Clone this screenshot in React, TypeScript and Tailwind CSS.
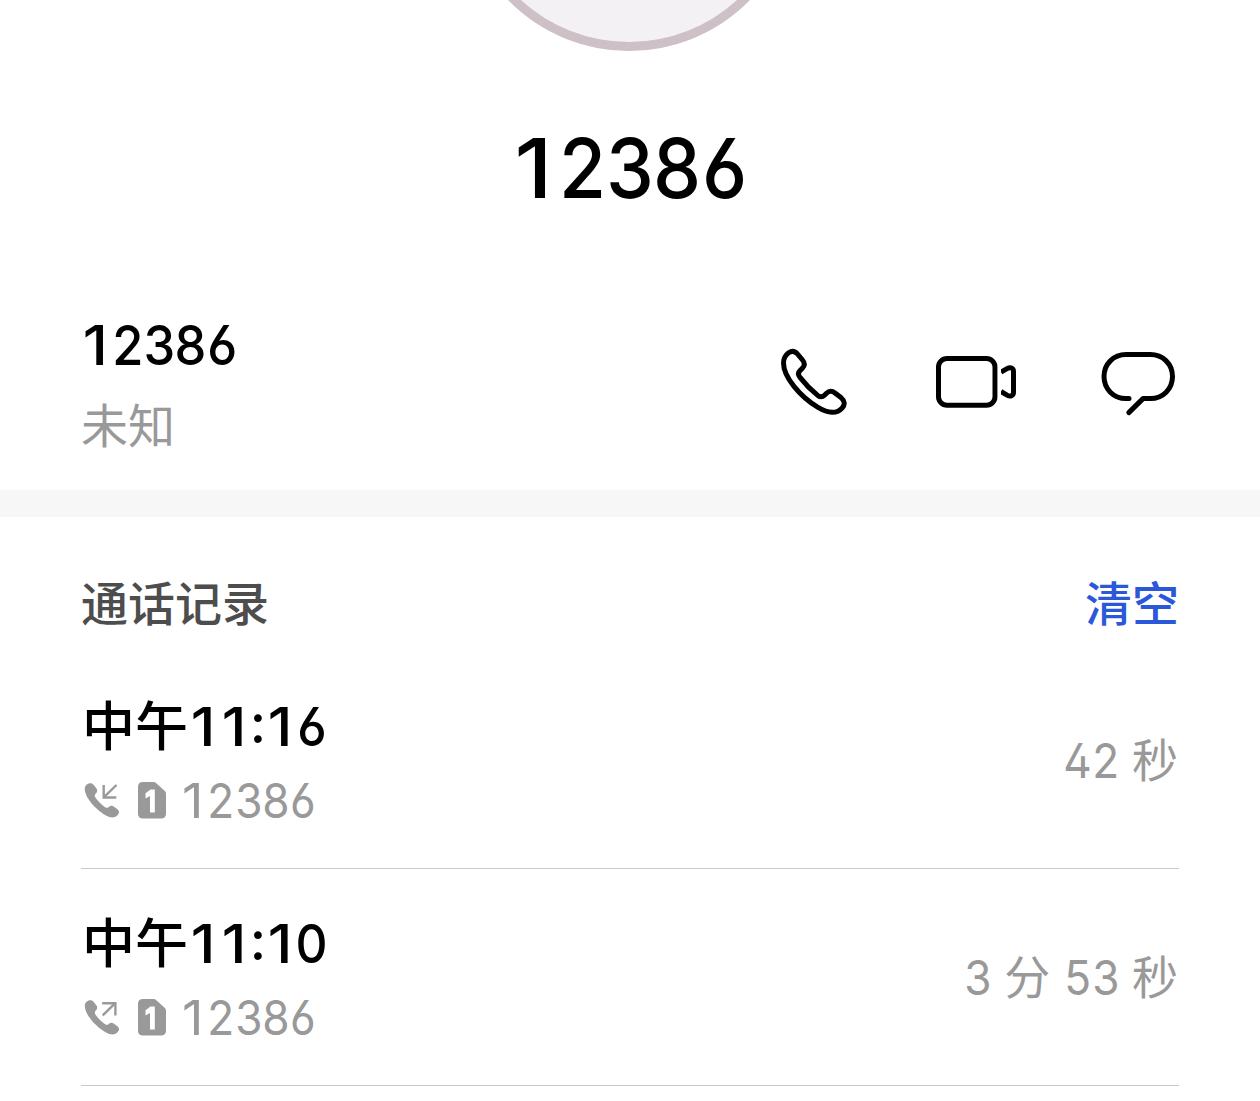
import type { ReactNode } from 'react';

const cjk = "font-['Noto_Sans_CJK_SC',sans-serif]";

function glyphClass(char: string) {
  if (char === '1') return '-translate-x-[0.02em] scale-x-[1.1]';
  if (char === ':') return '-translate-y-[0.06em]';
  return 'scale-x-[0.92]';
}

function Digits({ className, children }: { className: string; children: string }) {
  return (
    <span className={`inline-flex font-['Inter',sans-serif] [font-feature-settings:'cv02','cv03'] ${className}`}>
      {children.split('').map((char, i) => (
        <span key={i} className={`inline-flex shrink-0 justify-center ${char === ':' ? 'w-[0.278em]' : 'w-[0.57em]'}`}>
          <span className={glyphClass(char)}>{char}</span>
        </span>
      ))}
    </span>
  );
}

function PhoneIcon() {
  return (
    <svg width="70" height="70" viewBox="0 0 70 70" fill="none" stroke="black" strokeWidth="5" strokeLinejoin="round">
      <path d="M3.5 16C3.5 11 5.8 7.8 8.6 5.7C11.7 3.6 15 4 17.5 7L22.5 13C25 16 24.7 19 22.2 21.4L20.2 23.4C18 25.5 18 28 20 30.4C25.5 37.5 31.5 43.5 37.7 48.4C40.3 50.3 42.5 50.2 44.5 48.2L46.5 46.2C49 43.8 52 43.6 55 46L61 50.6C64.8 53.8 65.2 57.6 62.3 60.8C57 67 48 66.4 38 60.4C20 49.5 3.5 30 3.5 16Z" />
    </svg>
  );
}

function VideoIcon() {
  return (
    <svg width="82" height="54" viewBox="0 0 82 54" fill="none" stroke="black" strokeWidth="5">
      <rect x="3.5" y="3.5" width="56.5" height="46.7" rx="8.5" />
      <path d="M66 17.2L72 13.6C75.5 11.7 78.5 13 78.5 16.5V37.2C78.5 40.7 75.5 42 72 40.1L66 36.5" />
      <path d="M62.8 10H66V44H62.8Z" fill="white" stroke="none" />
    </svg>
  );
}

function MessageIcon() {
  return (
    <svg width="76" height="66" viewBox="0 0 76 66" fill="none" stroke="black" strokeWidth="5" strokeLinecap="round" strokeLinejoin="round">
      <path d="M29 47.6H26C13.5 47.6 4 38 4 25.6C4 13 13.5 3.6 26 3.6H50.3C63 3.6 72.5 13 72.5 25.6C72.5 38 63 47.6 50.3 47.6H43L28.8 61.6" />
    </svg>
  );
}

function CallIcon({ outgoing }: { outgoing: boolean }) {
  return (
    <svg width="36" height="37" viewBox="0 0 36 37" fill="none">
      <path fill="#999999" d="M.8 7C.8 2 6.5-.4 9.5 2.7L12.3 6.3C13.8 8.2 13.4 10 11.8 11.6C10.4 13 10.5 14.4 11.7 16C14.3 19.6 17.2 22.4 20.8 25C22.5 26.3 23.5 26 24.8 24.9C26.2 23.6 27.8 23.3 29.7 24.5L33.4 27.2C35.8 29.1 35.5 31.5 33 33.8C30 36.4 26.2 35.9 21.6 33.3C11.7 27.5.8 15.5.8 7Z" />
      {outgoing ? (
        <g stroke="#999999" strokeWidth="2.4">
          <path d="M18.2 4.3H31.4V16.5" />
          <path d="M18.7 16.3L31 4.4" />
        </g>
      ) : (
        <g stroke="#999999" strokeWidth="2.4">
          <path d="M19.7 3V15.5H32.3" />
          <path d="M20 15.2L32.5 3" />
        </g>
      )}
    </svg>
  );
}

function SimIcon() {
  return (
    <svg width="28" height="37" viewBox="0 0 28 37">
      <path fill="#999999" d="M5 0H15.2C16.4 0 17.2.3 18 1L26.6 8.8C27.6 9.7 28 10.5 28 11.8V31.5C28 34.8 26.3 36.5 23 36.5H5C1.7 36.5 0 34.8 0 31.5V5C0 1.7 1.7 0 5 0Z" />
      <path fill="white" d="M12.5 7.5H16.8V30.5H12V14L7.5 16.5V11.3Z" />
    </svg>
  );
}

function CallRow({ minute, outgoing, duration }: { minute: string; outgoing: boolean; duration: ReactNode }) {
  return (
    <div className="flex h-[217px] shrink-0 items-start justify-between border-b border-[#c9c9c9]">
      <div>
        <div className="flex h-[124px] items-start pt-[44px] pl-px text-[54px] leading-[60px] font-medium text-black">
          <span className={`${cjk} -mt-[3px] w-[107px] whitespace-nowrap text-[53px]`}>中午</span>
          <Digits className="mt-px">{minute}</Digits>
        </div>
        <div className="flex h-[48px] items-center pl-[3px]">
          <CallIcon outgoing={outgoing} />
          <div className="ml-[18px]"><SimIcon /></div>
          <Digits className="mt-[2px] ml-[14px] text-[48px] leading-[48px] text-[#999999]">12386</Digits>
        </div>
      </div>
      <div className="mt-[75px] flex items-start pr-px text-[46px] leading-[60px] text-[#999999]">{duration}</div>
    </div>
  );
}

export default function App() {
  return (
    <main className={`flex h-[1101px] w-[1260px] flex-col overflow-hidden bg-white ${cjk}`}>
      <header className="flex h-[490px] shrink-0 flex-col">
        <div className="flex h-[51px] w-[1258px] items-end justify-center overflow-hidden">
          <div className="size-[338px] shrink-0 rounded-full border-[9px] border-[#cdc0c6] bg-[#f4f1f4]" />
        </div>
        <div className="flex h-[234px] pt-[76px] pl-[512px]">
          <Digits className="self-start text-[83px] leading-[83px] font-medium">12386</Digits>
        </div>
        <div className="flex h-[205px] items-start justify-between pr-[84px] pl-[81px]">
          <div className="flex flex-col items-start pt-[33px]">
            <Digits className="text-[55px] leading-[55px] font-medium">12386</Digits>
            <span className="mt-[20px] text-[47px] leading-[60px] text-[#999999]">未知</span>
          </div>
          <div className="flex items-start pt-[62px]">
            <PhoneIcon />
            <div className="mt-[8px] ml-[85px]"><VideoIcon /></div>
            <div className="mt-[4px] ml-[83px]"><MessageIcon /></div>
          </div>
        </div>
      </header>
      <div className="h-[27px] shrink-0 bg-[#f7f7f7]" />
      <section className="flex flex-col px-[81px]">
        <div className="flex h-[135px] shrink-0 items-start justify-between pt-[54px] text-[47px] leading-[60px] font-medium">
          <h2 className="text-[#4d4d4d]">通话记录</h2>
          <button className="text-[#2b58d9]">清空</button>
        </div>
        <CallRow
          minute="11:16"
          outgoing={false}
          duration={<><Digits className="mt-[4px] mr-[13px] text-[48px]">42</Digits><span className={cjk}>秒</span></>}
        />
        <CallRow
          minute="11:10"
          outgoing
          duration={<><Digits className="mt-[4px] mr-[13px] text-[48px]">3</Digits><span className={cjk}>分</span><Digits className="mt-[4px] mr-[13px] ml-[14px] text-[48px]">53</Digits><span className={cjk}>秒</span></>}
        />
      </section>
    </main>
  );
}
